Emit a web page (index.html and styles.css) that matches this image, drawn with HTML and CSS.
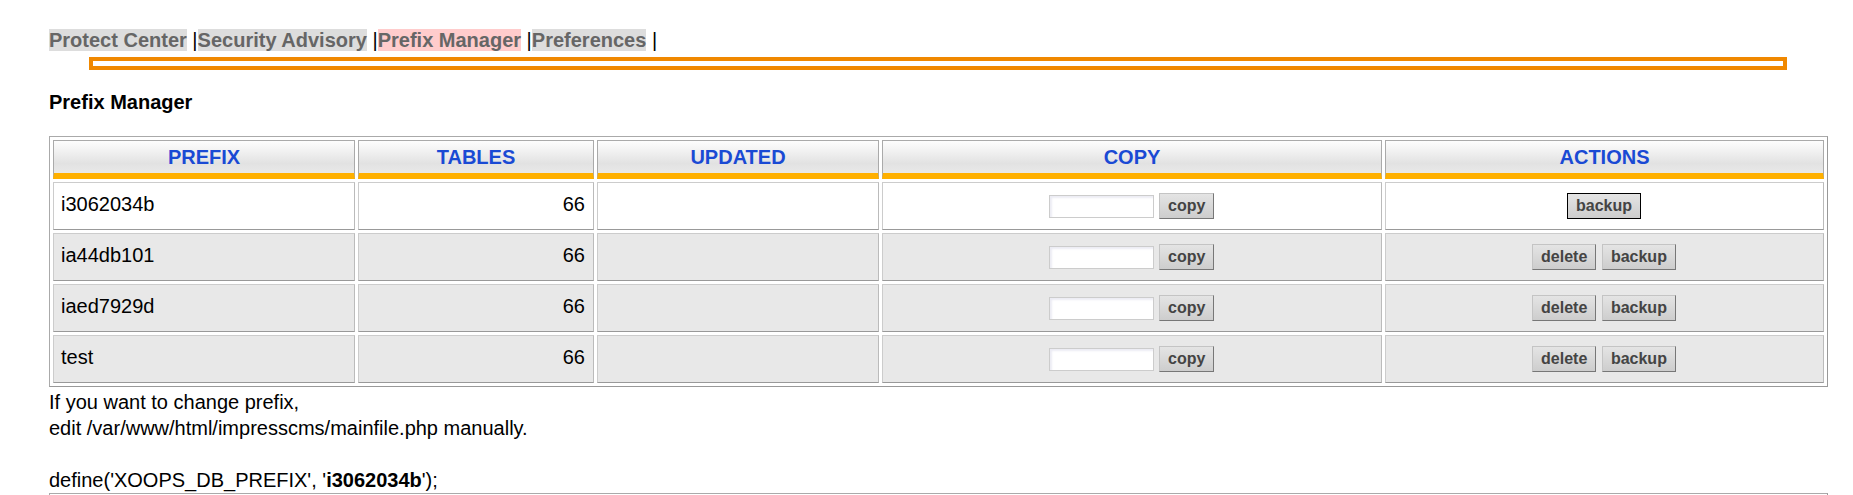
FILE: index.html
```html
<!DOCTYPE html>
<html>
<head>
<meta charset="utf-8">
<title>Prefix Manager</title>
<link rel="stylesheet" href="styles.css">
</head>
<body>
<div class="page">
  <div class="nav"><a class="tab">Protect Center</a> |<a class="tab">Security Advisory</a> |<a class="tab active">Prefix Manager</a> |<a class="tab">Preferences</a> |</div>
  <div class="rule"></div>
  <h3 class="title">Prefix Manager</h3>
  <table class="grid">
    <thead>
      <tr>
        <th class="c-prefix">PREFIX</th>
        <th class="c-tables">TABLES</th>
        <th class="c-updated">UPDATED</th>
        <th class="c-copy">COPY</th>
        <th class="c-actions">ACTIONS</th>
      </tr>
    </thead>
    <tbody>
      <tr class="odd">
        <td>i3062034b</td>
        <td class="num">66</td>
        <td></td>
        <td class="center"><input class="field" type="text"> <button class="btn">copy</button></td>
        <td class="center"><button class="btn btn-default">backup</button></td>
      </tr>
      <tr class="even">
        <td>ia44db101</td>
        <td class="num">66</td>
        <td></td>
        <td class="center"><input class="field" type="text"> <button class="btn">copy</button></td>
        <td class="center"><button class="btn">delete</button> <button class="btn">backup</button></td>
      </tr>
      <tr class="even">
        <td>iaed7929d</td>
        <td class="num">66</td>
        <td></td>
        <td class="center"><input class="field" type="text"> <button class="btn">copy</button></td>
        <td class="center"><button class="btn">delete</button> <button class="btn">backup</button></td>
      </tr>
      <tr class="even">
        <td>test</td>
        <td class="num">66</td>
        <td></td>
        <td class="center"><input class="field" type="text"> <button class="btn">copy</button></td>
        <td class="center"><button class="btn">delete</button> <button class="btn">backup</button></td>
      </tr>
    </tbody>
  </table>
  <p class="note">If you want to change prefix,<br>edit /var/www/html/impresscms/mainfile.php manually.<br><br>define('XOOPS_DB_PREFIX', '<b>i3062034b</b>');</p>
  <table class="grid grid-next">
    <tbody>
      <tr class="odd"><td>&nbsp;</td></tr>
    </tbody>
  </table>
</div>
</body>
</html>
```

FILE: styles.css
```css
html, body {
  margin: 0;
  padding: 0;
  background: #fff;
}

body {
  font-family: "Liberation Sans", Arial, sans-serif;
  font-size: 20px;
  color: #000;
}

.page {
  padding: 29px 25px 0 49px;
}

.nav {
  line-height: normal;
  color: #000;
}

.tab {
  font-weight: bold;
  color: #666;
  background: #ddd;
  text-decoration: none;
}

.tab.active {
  background: #fcc;
}

.rule {
  margin: 5px 41px 0 40px;
  height: 5px;
  border: 4px solid #f08800;
}

.title {
  margin: 21px 0 22px;
  font-size: 20px;
  font-weight: bold;
  line-height: normal;
}

.grid {
  width: 1779px;
  table-layout: fixed;
  border-collapse: separate;
  border-spacing: 3px;
  border: 1px solid #aaa;
  border-right-color: #999;
  border-bottom-color: #999;
}

.grid th,
.grid td {
  box-sizing: border-box;
}

.grid th {
  padding: 5px 4px 4px;
  font-size: 20px;
  font-weight: bold;
  color: #1a4ad4;
  text-align: center;
  line-height: normal;
  border: 1px solid #aaa;
  border-bottom: 6px solid #ffb000;
  background: linear-gradient(#fdfdfd 0%, #f0f0f0 35%, #e2e2e2 70%, #e9e9e9 100%);
}

.c-prefix { width: 302px; }
.c-tables { width: 236px; }
.c-updated { width: 282px; }
.c-copy { width: 500px; }
.c-actions { width: 439px; }

.grid td {
  padding: 10px 8px 10px 7px;
  vertical-align: baseline;
  line-height: normal;
  border: 1px solid #ccc;
  border-bottom-color: #999;
  border-right-color: #bbb;
}

.odd td {
  background: #fff;
}

.even td {
  background: #e8e8e8;
}

.num {
  text-align: right;
}

.center {
  text-align: center;
}

.field {
  box-sizing: border-box;
  width: 105px;
  height: 23px;
  margin: 0;
  padding: 0 3px;
  font-family: "Liberation Sans", Arial, sans-serif;
  font-size: 16px;
  border: 1px solid #ccc;
  background: #fff;
  box-shadow: inset 2px 2px 2px #ececf4;
}

.btn {
  box-sizing: border-box;
  height: 26px;
  margin: 0;
  padding: 3px 8px;
  font-family: "Liberation Sans", Arial, sans-serif;
  font-size: 16px;
  font-weight: bold;
  line-height: 18px;
  color: #444;
  background: linear-gradient(#e4e4e4, #cdcdcd);
  border: 1px solid;
  border-color: #c4c4c4 #777 #777 #c4c4c4;
  border-radius: 0;
}

.btn-default {
  border-color: #000;
}

.note {
  margin: 2px 0 0;
  line-height: 26px;
}

.grid-next {
  margin: 0;
}
```
